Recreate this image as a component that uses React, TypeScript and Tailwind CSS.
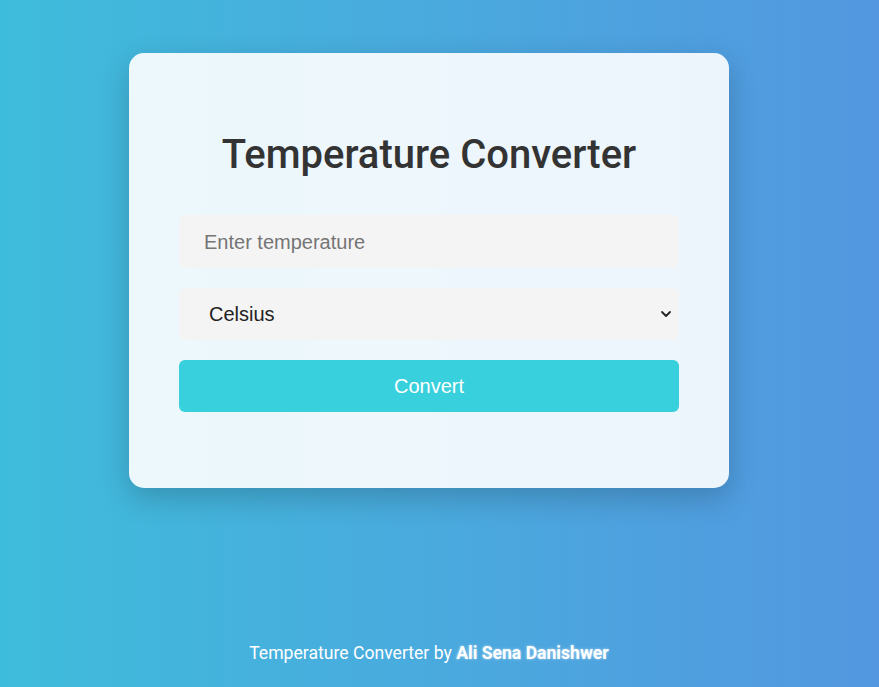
import React from "react";

export default function App() {
  return (
    <div
      className="min-h-screen w-full flex flex-col bg-gradient-to-r from-[#3ebcdb] to-[#5297e0]"
      style={{ fontFamily: "Roboto, 'Liberation Sans', sans-serif" }}
    >
      <div className="flex-1 flex flex-col items-center pr-[21px]">
        <div className="mt-[53px] w-[600px] h-[435px] rounded-[15px] bg-white/90 shadow-[0_10px_30px_rgba(0,0,0,0.2)] px-[50px] pt-[78px] flex flex-col">
          <h1 className="text-[40px] leading-[47px] text-center text-[#333] font-medium font-['Roboto',sans-serif]">
            Temperature Converter
          </h1>
          <div
            className="mt-[37px] h-[53px] rounded-[6px] bg-[#f4f4f4] flex items-center pl-[25px] text-[20px] text-[#757575]"
            style={{ fontFamily: "'Liberation Sans', Arial, sans-serif" }}
          >
            <input
              className="w-full bg-transparent outline-none placeholder:text-[#757575] text-[#333]"
              placeholder="Enter temperature"
            />
          </div>
          <div
            className="relative mt-[20px] h-[52px] rounded-[6px] bg-[#f4f4f4] flex items-center pl-[30px] text-[20px] text-[#222]"
            style={{ fontFamily: "'Liberation Sans', Arial, sans-serif" }}
          >
            <span>Celsius</span>
            <svg
              className="absolute right-[7px] top-1/2 -translate-y-1/2"
              width="12"
              height="12"
              viewBox="0 0 12 12"
              fill="none"
            >
              <path d="M2 4l4 4 4-4" stroke="#222" strokeWidth="1.8" strokeLinecap="round" strokeLinejoin="round" />
            </svg>
          </div>
          <button
            className="mt-[20px] h-[52px] rounded-[6px] bg-[#38d0dc] text-white text-[20px]"
            style={{ fontFamily: "'Liberation Sans', Arial, sans-serif" }}
          >
            Convert
          </button>
        </div>
      </div>
      <div className="pr-[21px] pb-[23px] text-center text-white text-[17.6px] leading-[21px]">
        Temperature Converter by{" "}
        <span className="font-bold [text-shadow:0_0_3px_rgba(255,255,255,0.6)]">Ali Sena Danishwer</span>
      </div>
    </div>
  );
}
